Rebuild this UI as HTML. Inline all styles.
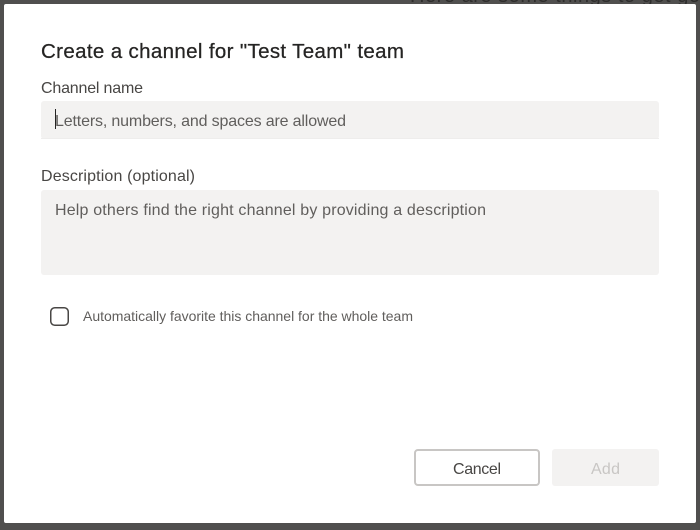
<!DOCTYPE html>
<html>
<head>
<meta charset="utf-8">
<style>
html,body{margin:0;padding:0;width:700px;height:530px;overflow:hidden;background:#504f4e}
svg{display:block}
text{font-family:"Liberation Sans",sans-serif}
</style>
</head>
<body>
<svg width="700" height="530" viewBox="0 0 700 530" xmlns="http://www.w3.org/2000/svg">
<rect width="700" height="530" fill="#504f4e"/>
<text x="410" y="2" font-size="20" fill="#2e2d2c" textLength="290" lengthAdjust="spacing">Here are some things to get go</text>
<rect x="4" y="4" width="692" height="519" rx="2" fill="#fff"/>
<text x="41" y="58" font-size="20.5" fill="#252423" stroke="#252423" stroke-width="0.25" textLength="363" lengthAdjust="spacing">Create a channel for "Test Team" team</text>
<text x="41" y="93" font-size="16" fill="#484644" textLength="102" lengthAdjust="spacing">Channel name</text>
<rect x="41" y="101" width="618" height="38" rx="3" fill="#f3f2f1"/>
<rect x="41" y="138" width="618" height="1" fill="#eeedec"/>
<text x="55" y="126" font-size="16" fill="#605e5c" textLength="291" lengthAdjust="spacing">Letters, numbers, and spaces are allowed</text>
<rect x="55" y="109" width="1" height="20" fill="#252423"/>
<text x="41" y="181" font-size="16" fill="#484644" textLength="154" lengthAdjust="spacing">Description (optional)</text>
<rect x="41" y="190" width="618" height="85" rx="3" fill="#f3f2f1"/>
<text x="55" y="215" font-size="16" fill="#605e5c" textLength="431" lengthAdjust="spacing">Help others find the right channel by providing a description</text>
<rect x="50.75" y="307.75" width="17.5" height="17.5" rx="4" fill="#fff" stroke="#484644" stroke-width="1.5"/>
<text x="83" y="321" font-size="14" fill="#605e5c" textLength="330" lengthAdjust="spacing">Automatically favorite this channel for the whole team</text>
<rect x="415" y="450" width="124" height="35" rx="3" fill="#fff" stroke="#c8c6c4" stroke-width="2"/>
<text x="453" y="474" font-size="16" fill="#484644" textLength="48" lengthAdjust="spacing">Cancel</text>
<rect x="552" y="449" width="107" height="37" rx="3" fill="#f3f2f1"/>
<text x="591" y="474" font-size="16" fill="#c8c6c4" textLength="29" lengthAdjust="spacing">Add</text>
</svg>
</body>
</html>
